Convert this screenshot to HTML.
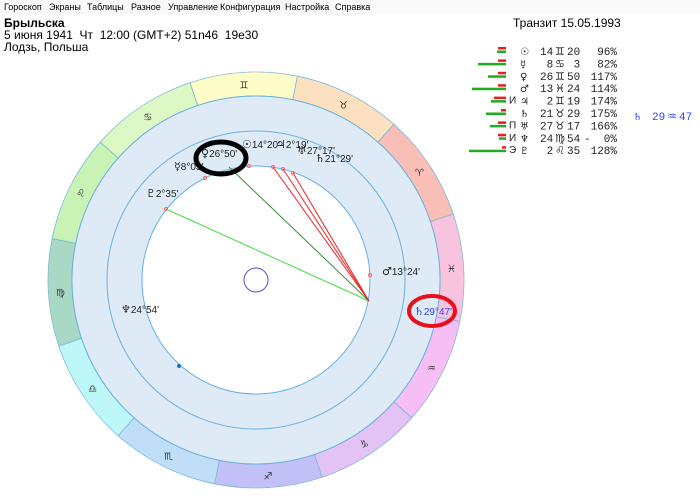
<!DOCTYPE html>
<html><head><meta charset="utf-8"><style>
html,body{margin:0;padding:0;background:#fff;width:700px;height:499px;overflow:hidden;font-family:"Liberation Sans","DejaVu Sans",sans-serif;}
.menu{position:absolute;left:0;top:0;width:700px;height:14px;background:#f9f9f9;font-size:9px;color:#000;}
.menu span{position:absolute;top:2px}
.t{position:absolute;white-space:nowrap;color:#000}
</style></head><body>
<div class="menu">
<span style="left:4px">Гороскоп</span><span style="left:49px">Экраны</span><span style="left:87px">Таблицы</span><span style="left:131px">Разное</span><span style="left:168px">Управление</span><span style="left:220px">Конфигурация</span><span style="left:285px">Настройка</span><span style="left:335px">Справка</span>
</div>
<div class="t" style="left:4px;top:16px;font-size:12px;font-weight:bold">Брыльска</div>
<div class="t" style="left:4px;top:28px;font-size:12px">5 июня 1941&nbsp; Чт&nbsp; 12:00 (GMT+2) 51n46&nbsp; 19e30</div>
<div class="t" style="left:4px;top:40px;font-size:12px">Лодзь, Польша</div>
<div class="t" style="left:513px;top:16px;font-size:12px">Транзит 15.05.1993</div>

<svg id="ch" width="700" height="499" style="position:absolute;left:0;top:0" font-family="Liberation Sans, DejaVu Sans, sans-serif"></svg>

<script>
var s=document.getElementById('ch'),cx=256,cy=280,R=208,r1=184,r2=149,r3=114;
function p(a,r){a=a*Math.PI/180;return [cx+r*Math.sin(a),cy-r*Math.cos(a)];}
var cols=['#fdfdc8','#fde0bf','#f9beb6','#f8c3de','#f7bdf5','#e3c2f5','#c3c0f7','#c0def8','#bdf7f7','#a9d8c5','#c8f3b5','#dbf8c5'];
var gl=['♊','♉','♈','♓','♒','♑','♐','♏','♎','♍','♌','♋'];
var h='';
for(var i=0;i<12;i++){var a0=-18.5+30*i,a1=a0+30;var A=p(a0,R),B=p(a1,R),C=p(a1,r1),D=p(a0,r1);
h+='<path d="M'+A+' A'+R+' '+R+' 0 0 1 '+B+' L'+C+' A'+r1+' '+r1+' 0 0 0 '+D+'Z" fill="'+cols[i]+'" stroke="#7ab8d8" stroke-width="0.8"/>';
var g=p(a0+15,196);h+='<text x="'+g[0]+'" y="'+(g[1]+4)+'" font-size="10" text-anchor="middle" fill="#333">'+gl[i]+'</text>';}
h+='<circle cx="'+cx+'" cy="'+cy+'" r="'+r1+'" fill="#deebf7" stroke="#6ab0e0"/>';
h+='<circle cx="'+cx+'" cy="'+cy+'" r="'+r2+'" fill="none" stroke="#6ab0e0"/>';
h+='<circle cx="'+cx+'" cy="'+cy+'" r="'+r3+'" fill="#fff" stroke="#6ab0e0"/>';
h+='<circle cx="'+cx+'" cy="'+cy+'" r="12" fill="none" stroke="#5a50c0"/>';
h+='<line x1="166" y1="209" x2="369" y2="301" stroke="#44dd44"/>';
h+='<line x1="229" y1="167" x2="369" y2="301" stroke="#3a8a3a"/>';
[[273,167],[283,169],[293,173]].forEach(function(q){h+='<line x1="'+q[0]+'" y1="'+q[1]+'" x2="369" y2="301" stroke="#ee2222"/>';h+='<circle cx="'+q[0]+'" cy="'+q[1]+'" r="1.5" fill="none" stroke="#f66"/>';});
[[166,209],[205,178],[249,166],[370,275]].forEach(function(q){h+='<circle cx="'+q[0]+'" cy="'+q[1]+'" r="1.5" fill="none" stroke="#f66"/>';});
h+='<circle cx="179" cy="366" r="2" fill="#1a70c0"/>';
var G='font-family="DejaVu Sans, sans-serif" font-size="11"';
var L=[['☉','14°20\'',242,148],['♃','2°19\'',276,148],['♅','27°17\'',297,154],['♄','21°29\'',315,162],['♀','26°50\'',201,157],['☿','8°03\'',174,170],['♇','2°35\'',146,197],['♂','13°24\'',382,275],['♆','24°54\'',121,313]];
L.forEach(function(l){h+='<text x="'+l[2]+'" y="'+l[3]+'" fill="#222"><tspan '+G+'>'+l[0]+'</tspan><tspan font-size="10">'+l[1]+'</tspan></text>';});
h+='<text x="414" y="315" fill="#3344ee"><tspan '+G+'>♄</tspan><tspan font-size="10">29°47\'</tspan></text>';
h+='<ellipse cx="221" cy="158" rx="25" ry="16" fill="none" stroke="#000" stroke-width="5"/>';
h+='<ellipse cx="432" cy="311" rx="23" ry="15" fill="none" stroke="#e8101a" stroke-width="4"/>';
var rows=[[8,9,'','☉','14','♊','20','  96%'],[8,28,'','☿',' 8','♋',' 3','  82%'],[8,18,'','♀','26','♊','50',' 117%'],[8,34,'','♂','13','♓','24',' 114%'],[12,15,'И','♃',' 2','♊','19',' 174%'],[5,20,'','♄','21','♉','29',' 175%'],[8,16,'П','♅','27','♉','17',' 166%'],[8,7,'И','♆','24','♍','54','-  0%'],[4,37,'Э','♇',' 2','♌','35',' 128%']];
var mono='font-family="Liberation Mono, DejaVu Sans Mono, monospace"';
rows.forEach(function(r,i){var y=47+i*12.4;
h+='<rect x="'+(506-r[0])+'" y="'+y+'" width="'+r[0]+'" height="2.5" fill="#e52020"/>';
h+='<rect x="'+(506-r[1])+'" y="'+(y+3.5)+'" width="'+r[1]+'" height="2.5" fill="#22aa22"/>';
h+='<text x="509" y="'+(y+7)+'" font-size="10" fill="#222">'+r[2]+'</text>';
h+='<text x="520" y="'+(y+8)+'" font-family="DejaVu Sans, sans-serif" font-size="10" fill="#222">'+r[3]+'</text>';
h+='<text x="540" y="'+(y+8)+'" font-size="11" '+mono+' fill="#222" xml:space="preserve">'+r[4]+'</text>';
h+='<text x="555" y="'+(y+8)+'" font-size="11" fill="#222">'+r[5]+'</text>';
h+='<text x="567" y="'+(y+8)+'" font-size="11" '+mono+' fill="#222" xml:space="preserve">'+r[6]+'</text>';
h+='<text x="584" y="'+(y+8)+'" font-size="11" '+mono+' fill="#222" xml:space="preserve">'+r[7]+'</text>';});
h+='<text x="633" y="120" font-family="DejaVu Sans, sans-serif" font-size="10" fill="#3344ee">♄</text><text x="652" y="120" font-size="11" '+mono+' fill="#3344ee">29</text><text x="667" y="120" font-size="11" fill="#3344ee">♒</text><text x="679" y="120" font-size="11" '+mono+' fill="#3344ee">47</text>';
s.innerHTML=h;
</script>
</body></html>
